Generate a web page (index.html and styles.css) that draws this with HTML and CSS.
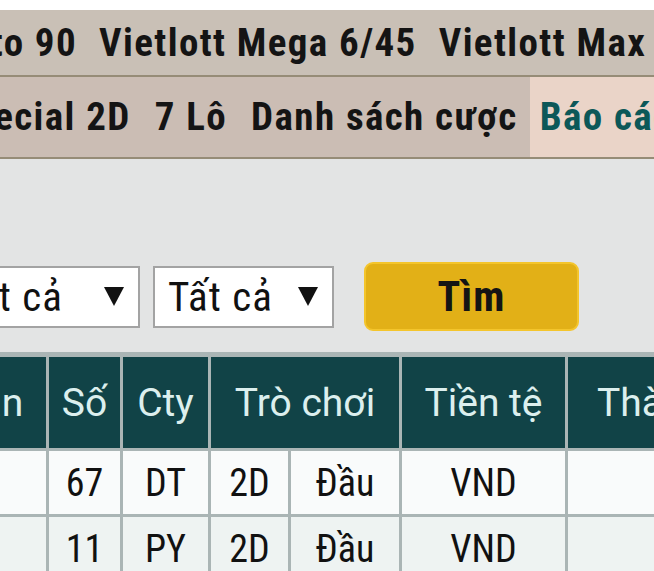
FILE: index.html
```html
<!DOCTYPE html>
<html lang="vi">
<head>
<meta charset="utf-8">
<title>Báo cáo</title>
<link rel="stylesheet" href="styles.css">
</head>
<body>
<div class="viewport">
  <div class="top-gap"></div>
  <nav class="nav nav-games">
    <div class="nav-track track-games">
      <a class="nav-item">Loto 90</a>
      <a class="nav-item">Vietlott Mega 6/45</a>
      <a class="nav-item">Vietlott Max 3D</a>
    </div>
  </nav>
  <nav class="nav nav-menu">
    <div class="nav-track track-menu">
      <a class="nav-item">Special 2D</a>
      <a class="nav-item">7 Lô</a>
      <a class="nav-item">Danh sách cược</a>
      <a class="nav-item active">Báo cáo</a>
    </div>
  </nav>
  <section class="filters">
    <div class="filter-row">
      <div class="select select-wide"><span class="select-text">Tất cả</span><span class="select-arrow"></span></div>
      <div class="select"><span class="select-text">Tất cả</span><span class="select-arrow"></span></div>
      <button class="btn-search">Tìm</button>
    </div>
  </section>
  <section class="table-wrap">
    <table class="report">
      <colgroup>
        <col class="c-time">
        <col class="c-num">
        <col class="c-cty">
        <col class="c-game1">
        <col class="c-game2">
        <col class="c-cur">
        <col class="c-win">
      </colgroup>
      <thead>
        <tr>
          <th>Thời gian</th>
          <th>Số</th>
          <th>Cty</th>
          <th colspan="2">Trò chơi</th>
          <th>Tiền tệ</th>
          <th class="left">Thành tiền</th>
        </tr>
      </thead>
      <tbody>
        <tr class="odd">
          <td></td>
          <td>67</td>
          <td>DT</td>
          <td>2D</td>
          <td>Đầu</td>
          <td>VND</td>
          <td></td>
        </tr>
        <tr class="even">
          <td></td>
          <td>11</td>
          <td>PY</td>
          <td>2D</td>
          <td>Đầu</td>
          <td>VND</td>
          <td></td>
        </tr>
      </tbody>
    </table>
  </section>
</div>
</body>
</html>
```

FILE: styles.css
```css
* { box-sizing: border-box; }
html, body { margin: 0; padding: 0; }
body {
  background: #ffffff;
  font-family: "Roboto Condensed", Roboto, "Liberation Sans Narrow", sans-serif;
  font-stretch: condensed;
  color: #111;
}
.viewport { width: 654px; height: 571px; overflow: hidden; }
.top-gap { height: 10px; background: #fff; }

.nav { overflow: hidden; border-bottom: 2px solid #968c77; }
.nav-games { height: 67px; background: #c9c0b6; }
.nav-menu { height: 82px; background: #cbbdb4; }
.nav-track { display: flex; height: 100%; white-space: nowrap; }
.track-games { margin-left: -61px; }
.track-menu { margin-left: -61px; }
.nav-item {
  display: flex; align-items: center;
  padding: 0 12px;
  font-weight: 700;
  font-size: 39px;
  letter-spacing: 1.4px;
  color: #141414;
}
.nav-games .nav-item { padding: 0 11px; }
.nav-item.active { background: #ead4c8; color: #0c5858; padding-left: 10px; }

.filters { background: #e3e4e4; padding: 103px 0 21px; }
.filter-row { display: flex; align-items: center; margin-left: -57px; }
.select {
  width: 181px; height: 62px;
  background: #fff;
  border: 2px solid #a3a3a3;
  display: flex; align-items: center; justify-content: space-between;
  padding: 0 14px 0 13px;
  margin-right: 13px;
  font-size: 41px;
  letter-spacing: 1px;
  color: #111;
}
.select-wide { width: 197px; }
.select-arrow {
  width: 0; height: 0;
  border-left: 10px solid transparent;
  border-right: 10px solid transparent;
  border-top: 19px solid #111;
}
.btn-search {
  margin-left: 17px;
  width: 215px; height: 69px;
  background: #e2b017;
  border: 2px solid #f4c52c;
  border-radius: 9px;
  font-family: inherit;
  font-stretch: condensed;
  font-weight: 700;
  font-size: 42px;
  letter-spacing: 1px;
  color: #141414;
  padding: 0;
}

.table-wrap { background: #e3e4e4; }
.report {
  table-layout: fixed;
  border-collapse: separate;
  border-spacing: 3px;
  background: #aab5b5;
  border-top: 2px solid #aab5b5;
  margin-left: -163px;
  width: 934px;
}
.c-time { width: 206px; }
.c-num { width: 71px; }
.c-cty { width: 85px; }
.c-game1 { width: 77px; }
.c-game2 { width: 108px; }
.c-cur { width: 163px; }
.c-win { width: 200px; }
.report th {
  height: 91px;
  background: #114347;
  color: #dcefee;
  font-family: Roboto, sans-serif;
  font-stretch: normal;
  font-weight: 400;
  font-size: 39px;
  padding: 0;
  text-align: center;
  white-space: nowrap;
}
.report th.left { text-align: left; padding-left: 29px; }
.report td {
  height: 63px;
  padding: 0;
  text-align: center;
  font-size: 38px;
  color: #111;
}
.report tr.odd td { background: #f9fbfb; }
.report tr.even td { background: #eef3f2; }
```
